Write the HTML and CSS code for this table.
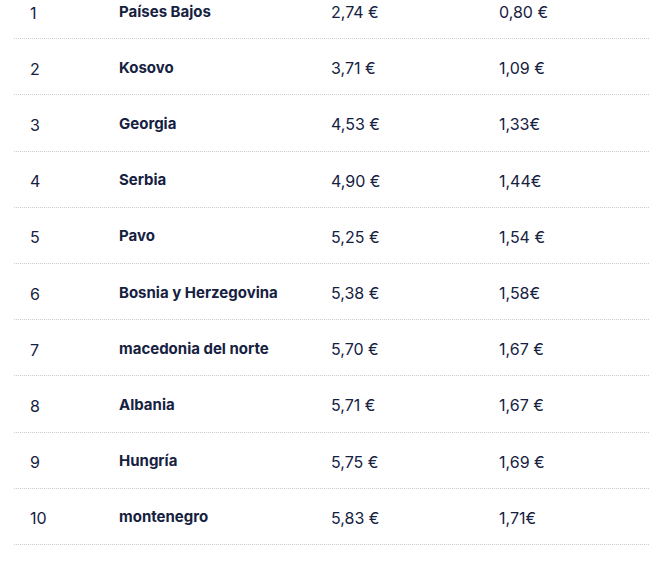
FILE: index.html
```html
<!DOCTYPE html>
<html lang="es">
<head>
<meta charset="utf-8">
<title>Ranking</title>
<link rel="stylesheet" href="styles.css">
</head>
<body>
<div class="table">
  <div class="row"><span class="rank">1</span><span class="name">Países Bajos</span><span class="val">2,74 €</span><span class="val">0,80 €</span></div>
  <div class="row"><span class="rank">2</span><span class="name">Kosovo</span><span class="val">3,71 €</span><span class="val">1,09 €</span></div>
  <div class="row"><span class="rank">3</span><span class="name">Georgia</span><span class="val">4,53 €</span><span class="val">1,33€</span></div>
  <div class="row"><span class="rank">4</span><span class="name">Serbia</span><span class="val">4,90 €</span><span class="val">1,44€</span></div>
  <div class="row"><span class="rank">5</span><span class="name">Pavo</span><span class="val">5,25 €</span><span class="val">1,54 €</span></div>
  <div class="row"><span class="rank">6</span><span class="name">Bosnia y Herzegovina</span><span class="val">5,38 €</span><span class="val">1,58€</span></div>
  <div class="row"><span class="rank">7</span><span class="name">macedonia del norte</span><span class="val">5,70 €</span><span class="val">1,67 €</span></div>
  <div class="row"><span class="rank">8</span><span class="name">Albania</span><span class="val">5,71 €</span><span class="val">1,67 €</span></div>
  <div class="row"><span class="rank">9</span><span class="name">Hungría</span><span class="val">5,75 €</span><span class="val">1,69 €</span></div>
  <div class="row"><span class="rank">10</span><span class="name">montenegro</span><span class="val">5,83 €</span><span class="val">1,71€</span></div>
</div>
</body>
</html>
```
FILE: styles.css
```css
html, body {
  margin: 0;
  padding: 0;
  background: #ffffff;
  overflow: hidden;
}
body {
  font-family: Inter, "Noto Sans", sans-serif;
  color: #15213f;
}
.table {
  margin: -17px 0 0 14px;
}
.row {
  display: grid;
  grid-template-columns: 89px 212px 168px 1fr;
  align-items: center;
  height: 56.2px;
  box-sizing: border-box;
  border-bottom: 1px dotted #c9ccd4;
}
.row > span {
  padding-left: 16px;
  white-space: nowrap;
}
.rank {
  font-size: 16px;
  font-weight: 400;
  padding-top: 4px;
}
.name {
  font-size: 15px;
  font-weight: 700;
  padding-top: 1px;
}
.val {
  font-size: 16px;
  font-weight: 400;
  padding-top: 3px;
}
```
